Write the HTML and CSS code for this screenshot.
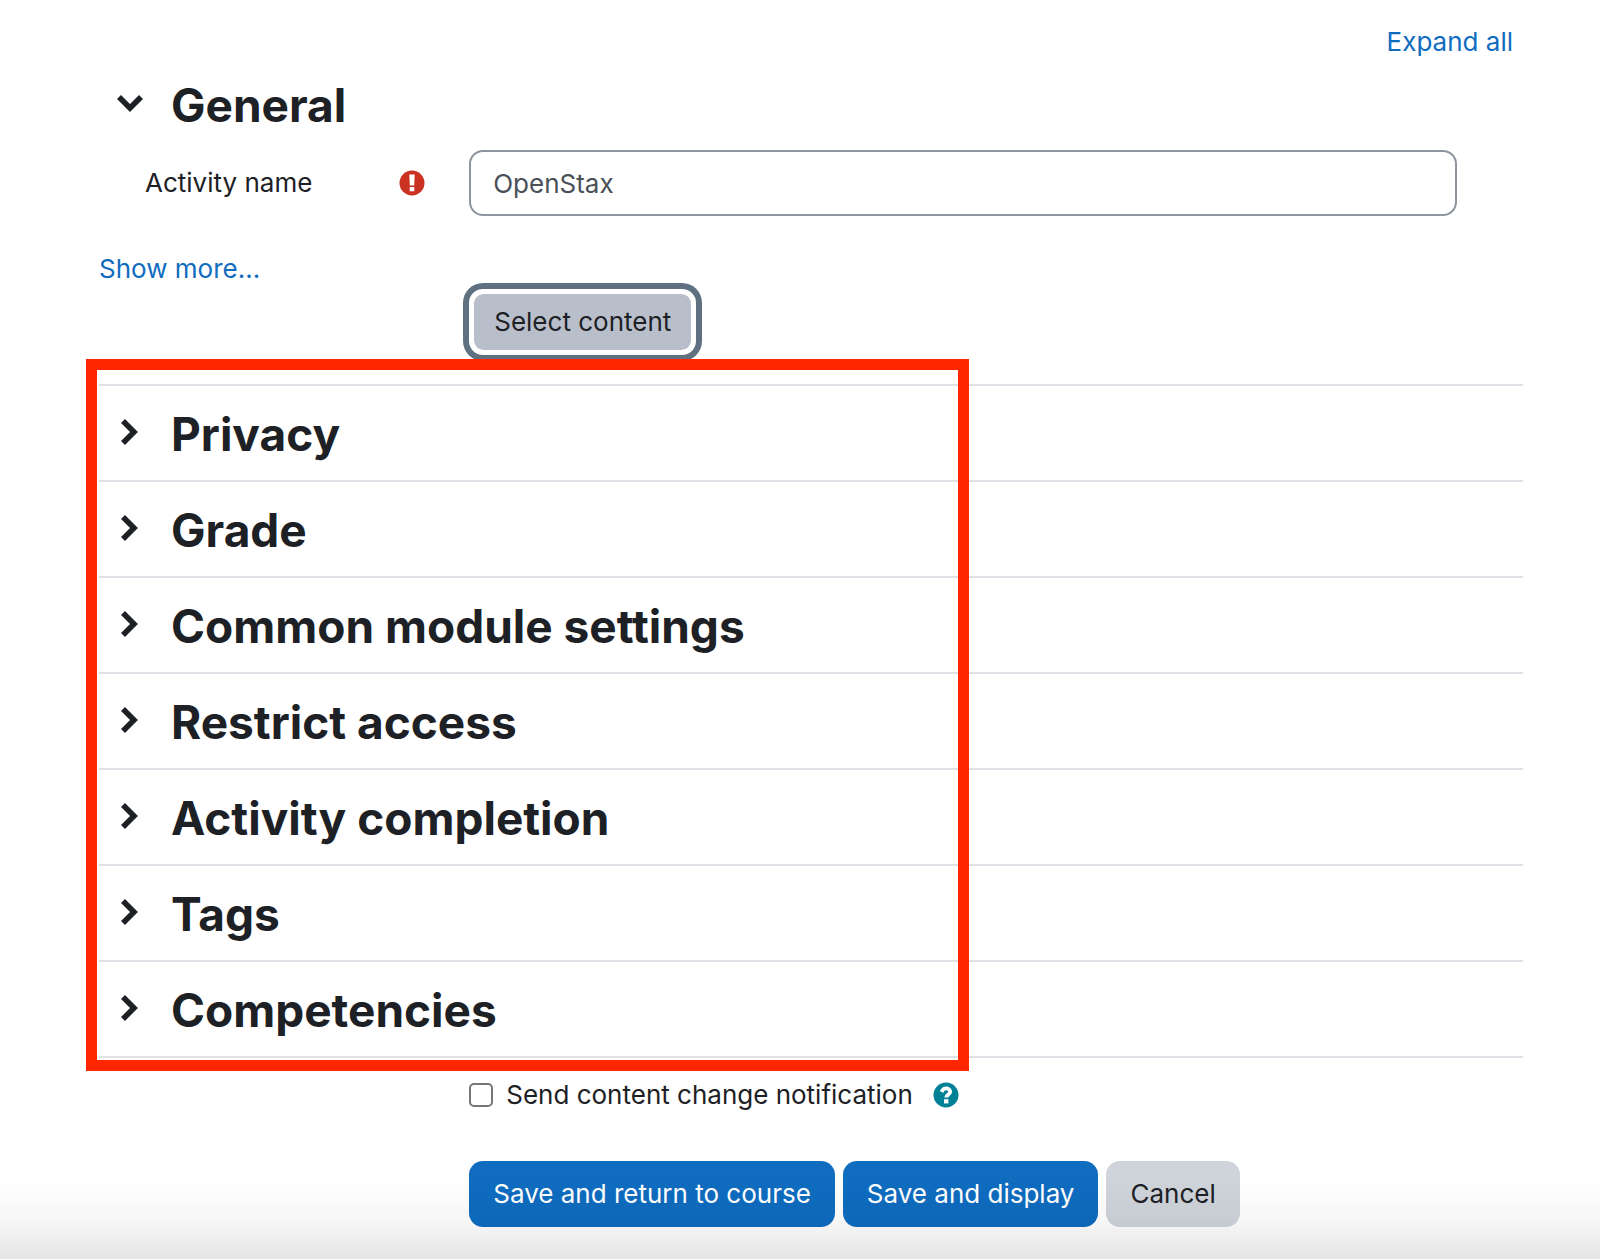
FILE: index.html
```
<!DOCTYPE html>
<html lang="en">
<head>
  <meta charset="UTF-8">
  <title>OpenStax activity settings</title>
  <link rel="stylesheet" href="styles.css">
</head>
<body>

<svg class="sprite" aria-hidden="true">
  <symbol id="chevron-right" viewBox="0 0 26 26">
    <path d="M6 2 L17 13 L6 24" fill="none" stroke="currentColor" stroke-width="5.6"/>
  </symbol>
  <symbol id="chevron-down" viewBox="0 0 26 26">
    <path d="M2 7 L13 18 L24 7" fill="none" stroke="currentColor" stroke-width="5.6"/>
  </symbol>
</svg>

<form class="settings">
  <div class="top-bar">
    <a href="#all">Expand all</a>
  </div>

  <h3 class="general">
    <button type="button" class="toggle" aria-expanded="true">
      <svg class="chevron"><use href="#chevron-down"/></svg>General
    </button>
  </h3>

  <div class="form-row">
    <div class="label-cell">
      <label for="name">Activity name</label>
      <svg class="icon" viewBox="0 0 26 26" role="img" aria-label="Required">
        <circle cx="13" cy="13" r="12.5" fill="#ca3120"/>
        <path d="M10.3 4.5 H15.7 L15.2 15.5 H10.8 Z M10.7 17 H15.3 V21.3 H10.7 Z" fill="#fff"/>
      </svg>
    </div>
    <div class="field-cell">
      <input type="text" id="name" class="text-input" value="OpenStax">
    </div>
  </div>

  <div class="show-more"><a href="#more">Show more...</a></div>

  <div class="form-row">
    <div class="field-cell">
      <button type="button" class="btn btn-select">Select content</button>
    </div>
  </div>

  <div class="sections">
    <h3 class="section"><button type="button" class="toggle"><svg class="chevron"><use href="#chevron-right"/></svg>Privacy</button></h3>
    <h3 class="section"><button type="button" class="toggle"><svg class="chevron"><use href="#chevron-right"/></svg>Grade</button></h3>
    <h3 class="section"><button type="button" class="toggle"><svg class="chevron"><use href="#chevron-right"/></svg>Common module settings</button></h3>
    <h3 class="section"><button type="button" class="toggle"><svg class="chevron"><use href="#chevron-right"/></svg>Restrict access</button></h3>
    <h3 class="section"><button type="button" class="toggle"><svg class="chevron"><use href="#chevron-right"/></svg>Activity completion</button></h3>
    <h3 class="section"><button type="button" class="toggle"><svg class="chevron"><use href="#chevron-right"/></svg>Tags</button></h3>
    <h3 class="section"><button type="button" class="toggle"><svg class="chevron"><use href="#chevron-right"/></svg>Competencies</button></h3>
    <div class="highlight"></div>
  </div>

  <div class="form-row notify">
    <div class="field-cell">
      <input type="checkbox" id="notify" class="checkbox">
      <label for="notify">Send content change notification</label>
      <button type="button" class="help" aria-label="Help">
        <svg class="icon" viewBox="0 0 26 26">
          <circle cx="13" cy="13" r="12.5" fill="#008196"/>
          <path d="M8.6 10 C9.6 7.3 11 6.4 13.1 6.4 C15.5 6.4 17.2 7.8 17.2 9.8 C17.2 12.7 13.2 12.5 13.2 15.6" fill="none" stroke="#fff" stroke-width="3.8"/>
          <path d="M11 17.2 H15.4 V21.4 H11 Z" fill="#fff"/>
        </svg>
      </button>
    </div>
  </div>

  <div class="form-row actions">
    <div class="field-cell buttons">
      <button type="submit" class="btn btn-primary">Save and return to course</button>
      <button type="submit" class="btn btn-primary">Save and display</button>
      <button type="button" class="btn btn-secondary">Cancel</button>
    </div>
  </div>
</form>

<div class="bottom-fade"></div>

</body>
</html>
```
FILE: styles.css
```
:root {
  --text: #1d2125;
  --link: #0f6cbf;
  --line: #dee2e6;
  --highlight: #ff2600;
}

* {
  box-sizing: border-box;
}

body {
  margin: 0;
  min-height: 100vh;
  background: #fff;
  color: var(--text);
  font-family: Inter, "Liberation Sans", sans-serif;
  font-size: 26px;
  line-height: 40px;
}

button, input {
  font: inherit;
  color: inherit;
}

a {
  color: var(--link);
  text-decoration: none;
}

.sprite {
  display: none;
}

.settings {
  padding: 22px 77px 32px 99px;
}

.top-bar {
  padding-right: 10px;
  text-align: right;
}

/* Collapsible headings */
.general, .section {
  margin: 0;
  font-size: 46px;
  font-weight: 700;
}

.general {
  height: 88px;
}

.section {
  height: 96px;
  border-bottom: 2px solid var(--line);
}

.toggle {
  display: flex;
  align-items: center;
  gap: 28px;
  height: 84px;
  padding: 2px 0 0 18px;
  border: none;
  background: none;
  cursor: pointer;
}

.section .toggle {
  height: 94px;
}

.chevron {
  width: 26px;
  height: 26px;
  margin-bottom: 4px;
}

/* Form rows */
.form-row {
  display: grid;
  grid-template-columns: 26% 1fr;
  align-items: center;
}

.label-cell {
  display: flex;
  align-items: center;
  justify-content: space-between;
  padding: 0 44px 0 46px;
}

.field-cell {
  grid-column: 2;
  display: flex;
  align-items: center;
  padding-right: 66px;
}

.icon {
  display: block;
  width: 26px;
  height: 26px;
}

.text-input {
  width: 100%;
  height: 66px;
  padding: 0 22px;
  border: 2px solid #8f959e;
  border-radius: 14px;
  background: #fff;
  color: #495057;
}

.show-more {
  margin-top: 33px;
}

.btn {
  height: 66px;
  padding: 0 24px;
  border: none;
  border-radius: 14px;
  cursor: pointer;
}

.btn-select {
  padding: 0 20px;
  border: 5px solid #fff;
  background: #b9bfca;
  background-clip: padding-box;
  box-shadow: 0 0 0 6px #5f7180;
}

.sections {
  position: relative;
  margin-top: 29px;
  border-top: 2px solid var(--line);
}

/* Frame drawn over the section list */
.highlight {
  position: absolute;
  top: -27px;
  bottom: -13px;
  left: -13px;
  width: 62%;
  border: 11px solid var(--highlight);
  pointer-events: none;
}

.notify {
  margin-top: 17px;
}

.checkbox {
  appearance: none;
  width: 24px;
  height: 24px;
  margin: 0 13px 0 0;
  border: 2px solid #767676;
  border-radius: 5px;
  background: #fff;
}

.help {
  margin-left: 20px;
  padding: 0;
  border: none;
  background: none;
  cursor: pointer;
}

.actions {
  margin-top: 46px;
}

.buttons {
  gap: 8px;
}

.btn-primary {
  background: var(--link);
  color: #fff;
}

.btn-secondary {
  background: #ced4da;
}

.bottom-fade {
  position: fixed;
  right: 0;
  bottom: 0;
  left: 0;
  height: 80px;
  background: linear-gradient(rgba(0, 0, 0, 0), rgba(0, 0, 0, 0.03) 50%, rgba(0, 0, 0, 0.1));
  pointer-events: none;
}
```
